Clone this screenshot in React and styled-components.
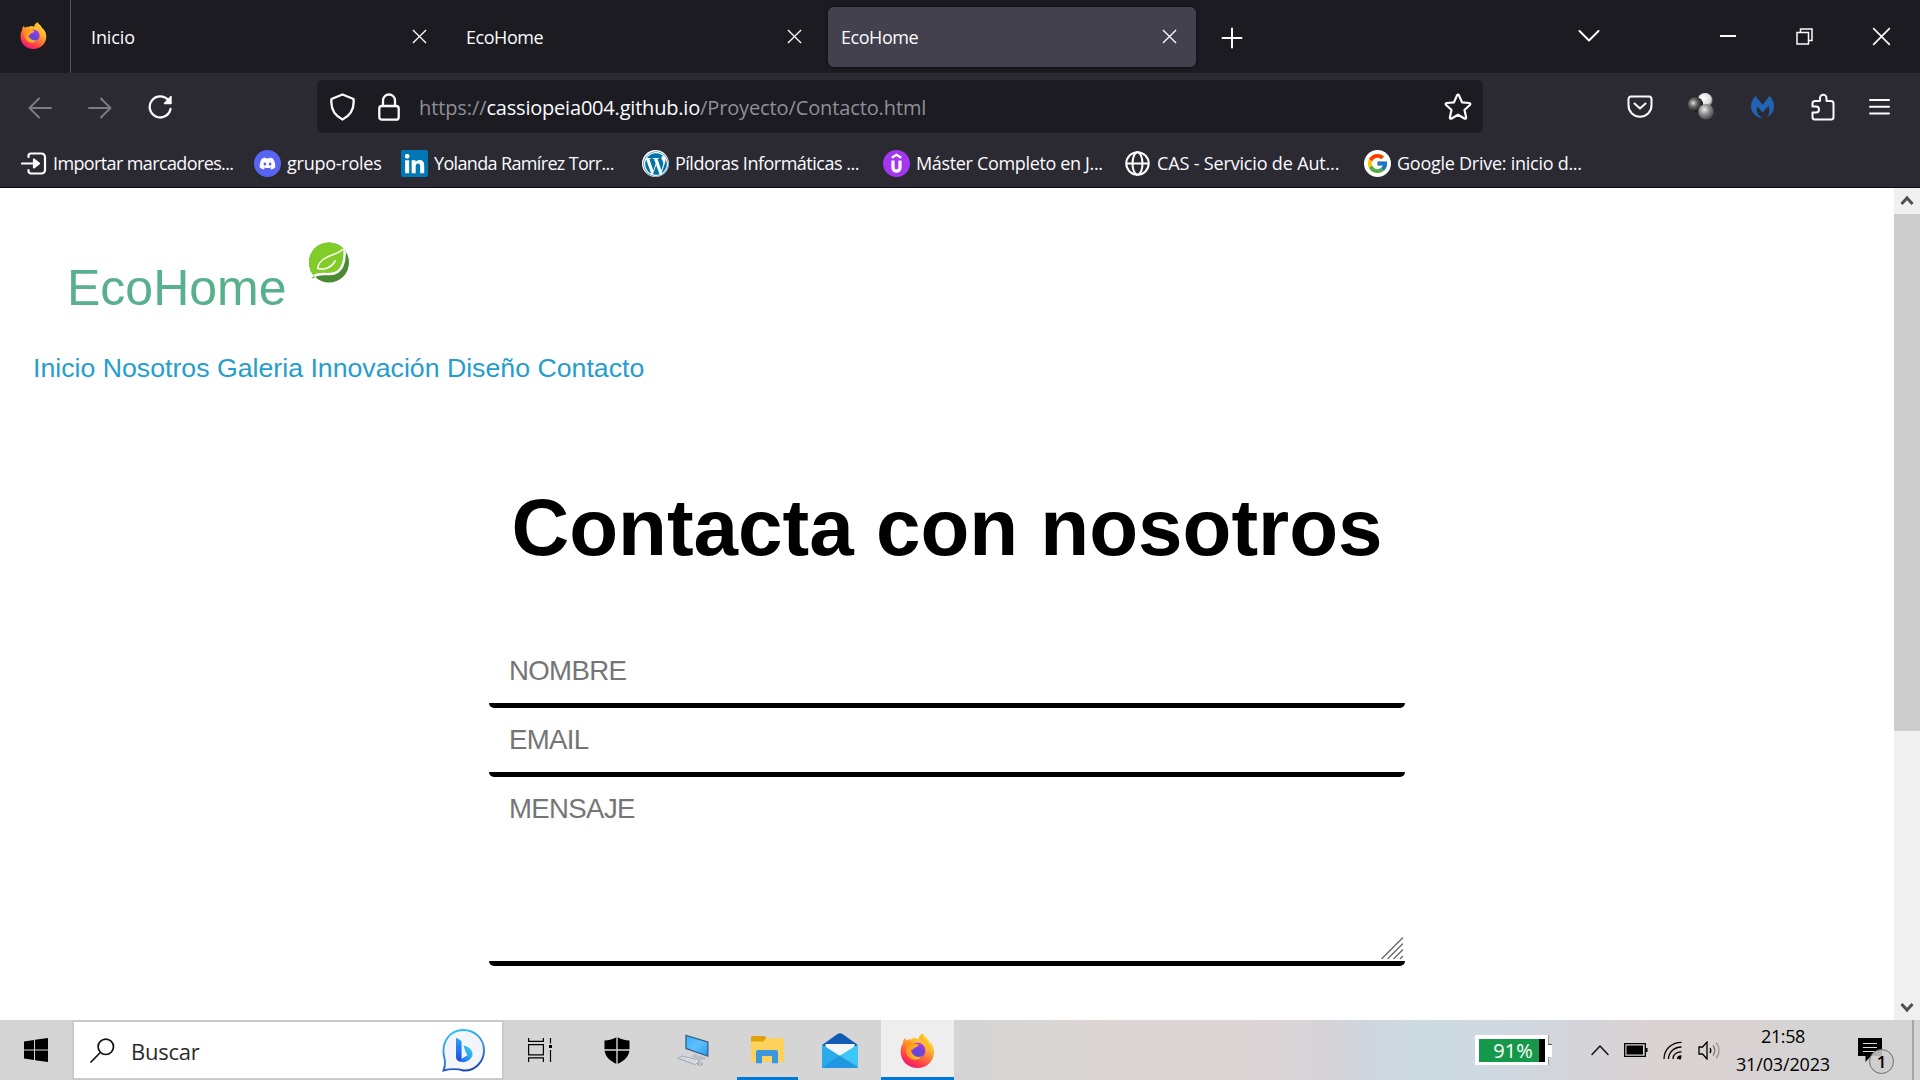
import React from "react";
import styled, { createGlobalStyle } from "styled-components";
import { FaDiscord, FaLinkedin, FaWordpress } from "react-icons/fa";
import { FcGoogle } from "react-icons/fc";

const GlobalStyle = createGlobalStyle`
  * { box-sizing: border-box; }
  body { margin: 0; background: #fff; overflow: hidden; }
`;

const uiFont = `"Open Sans", "Noto Sans", sans-serif`;
const pageFont = `"Liberation Sans", Arial, sans-serif`;

const Screen = styled.div`
  width: 1920px;
  height: 1080px;
  display: flex;
  flex-direction: column;
  overflow: hidden;
`;

const Label = styled.span`
  white-space: pre;
  letter-spacing: ${(p) => p.$track || 0}px;
`;

/* ---------- Tab strip ---------- */
const TabStrip = styled.header`
  height: 73px;
  flex: none;
  display: flex;
  align-items: center;
  background: #1c1b22;
  color: #fbfbfe;
  font: 18px ${uiFont};
`;

const FirefoxView = styled.div`
  width: 71px;
  height: 73px;
  padding: 22px 0 0 20px;
  border-right: 1px solid #55545c;
  margin-right: 7px;
`;

const Tab = styled.div`
  width: ${(p) => (p.$active ? 368 : 375)}px;
  height: 60px;
  padding: 0 ${(p) => (p.$active ? 19 : 26)}px 0 13px;
  display: flex;
  align-items: center;
  justify-content: space-between;
  border-radius: 6px;
  background: ${(p) => (p.$active ? "#42414d" : "transparent")};
  box-shadow: ${(p) => (p.$active ? "0 0 4px rgba(0,0,0,.5)" : "none")};
`;

const NewTab = styled.div`
  display: flex;
  margin-left: 25px;
  padding-top: 2px;
`;

const WindowControls = styled.div`
  margin-left: auto;
  padding-right: 29px;
  display: flex;
  align-items: center;
  gap: 59px;
`;

const ListTabs = styled.div`
  display: flex;
  margin-right: 61px;
`;

/* ---------- Navigation bar ---------- */
const NavBar = styled.div`
  height: 67px;
  flex: none;
  display: flex;
  align-items: center;
  background: #2b2a33;
  color: #fbfbfe;
`;

const NavButtons = styled.div`
  width: 317px;
  padding: 2px 0 0 28px;
  display: flex;
  align-items: center;
  gap: 36px;
`;

const UrlBar = styled.div`
  width: 1166px;
  height: 53px;
  padding: 0 11px 0 12px;
  display: flex;
  align-items: center;
  border-radius: 6px;
  background: #1c1b22;
  font: 20px ${uiFont};
`;

const UrlIcons = styled.div`
  width: 90px;
  display: flex;
  align-items: center;
  gap: 22px;
`;

const UrlText = styled.div`
  flex: 1;
  display: flex;
  color: #8f8f98;
  padding-top: 2px;
`;

const Host = styled(Label)`
  color: #fbfbfe;
`;

const ToolbarIcons = styled.div`
  flex: 1;
  display: flex;
  align-items: center;
  justify-content: space-between;
  padding: 0 29px 0 144px;
`;

/* ---------- Bookmarks ---------- */
const BookmarksBar = styled.nav`
  height: 48px;
  flex: none;
  display: flex;
  align-items: center;
  padding-left: 21px;
  background: #2b2a33;
  border-bottom: 1px solid #0c0c0d;
  color: #fbfbfe;
  font: 18px ${uiFont};
`;

const Bookmark = styled.div`
  width: ${(p) => p.$width}px;
  display: flex;
  align-items: center;
  gap: 6px;
`;

const BookmarkLabel = styled(Label)`
  padding-bottom: 1px;
`;

const Favicon = styled.span`
  width: 27px;
  height: 27px;
  margin-right: ${(p) => p.$pull || 0}px;
  flex: none;
  display: flex;
  align-items: center;
  justify-content: center;
  border-radius: ${(p) => p.$radius || "50%"};
  background: ${(p) => p.$bg || "transparent"};
  color: ${(p) => p.$fg || "#fff"};
  svg { flex: none; }
`;

/* ---------- Page ---------- */
const Viewport = styled.div`
  height: 832px;
  flex: none;
  display: flex;
  background: #fff;
`;

const Page = styled.main`
  width: 1894px;
  display: flex;
  flex-direction: column;
  padding-top: 48px;
  font-family: ${pageFont};
`;

const Brand = styled.div`
  height: 82px;
  display: flex;
  align-items: flex-start;
  gap: 14px;
  padding-left: 67px;
`;

const BrandName = styled.div`
  margin-top: 24px;
  width: 220px;
  font-size: 50px;
  line-height: 57px;
  color: #58b08c;
  white-space: nowrap;
`;

const SiteNav = styled.nav`
  margin: 35px 0 0 33px;
  font-size: 26.7px;
  line-height: 30px;
  color: #259dcd;
`;

const SiteLink = styled.a`
  color: inherit;
  text-decoration: none;
`;

const Title = styled.h1`
  margin: 99px 0 0;
  text-align: center;
  font-size: 80px;
  line-height: 92px;
  font-weight: 700;
  color: #000;
`;

const Form = styled.form`
  width: 916px;
  margin: 65px auto 0;
  display: flex;
  flex-direction: column;
`;

const Field = styled.input`
  display: block;
  width: 100%;
  height: ${(p) => p.$height || 69}px;
  padding: 17px 20px;
  margin: 0;
  border: 0;
  border-bottom: 5px solid #000;
  border-radius: 5px;
  outline: 0;
  resize: none;
  background: #fff;
  font: 27.6px/30px ${pageFont};
  letter-spacing: -0.65px;
  &::placeholder {
    color: #757575;
    opacity: 1;
  }
`;

const MessageBox = styled.div`
  position: relative;
`;

const Grip = styled.svg`
  position: absolute;
  right: 1px;
  bottom: 6px;
`;

const Scrollbar = styled.div`
  width: 26px;
  display: flex;
  flex-direction: column;
  align-items: center;
  background: #f0f0f0;
`;

const ScrollArrow = styled.div`
  height: 26px;
  display: flex;
  align-items: center;
  padding-bottom: ${(p) => p.$lift || 0}px;
`;

const Thumb = styled.div`
  width: 26px;
  height: 517px;
  margin-bottom: auto;
  background: #cdcdcd;
`;

/* ---------- Taskbar ---------- */
const Taskbar = styled.footer`
  height: 60px;
  flex: none;
  display: flex;
  align-items: stretch;
  color: #000;
  font-family: ${uiFont};
  background: linear-gradient(90deg, #d4d4d4 0, #d5d5d5 960px, #d9d6d4 1060px, #ddd5d5 1130px, #ddd4d5 1240px, #d6d4d8 1330px, #cfd6df 1370px, #cddae2 1420px, #cfd9e1 1500px, #d5d4d8 1590px, #dcd2d3 1660px, #dad2d2 1730px, #d5d4d4 1810px, #d4d4d4 1920px);
`;

const TaskItem = styled.div`
  width: ${(p) => p.$width}px;
  padding-right: ${(p) => p.$shift || 0}px;
  display: flex;
  align-items: center;
  justify-content: center;
  background: ${(p) => (p.$active ? "#eeeeee" : "transparent")};
  box-shadow: ${(p) => (p.$open ? "inset 0 -3px #0078d7" : "none")};
`;

const SearchBox = styled.div`
  width: 432px;
  border: 2px solid #cacaca;
  background: #fff;
  display: flex;
  align-items: center;
  padding: 0 17px 0 16px;
  color: #2b2b2b;
  font-size: 22px;
`;

const SearchText = styled(Label)`
  margin: 1px auto 0 16px;
`;

const Tray = styled.div`
  margin-left: auto;
  display: flex;
  align-items: center;
`;

const BatteryMeter = styled.div`
  display: flex;
  align-items: center;
  margin-right: 39px;
`;

const BatteryBody = styled.div`
  width: 73px;
  height: 30px;
  border: 4px solid #fff;
  border-bottom-width: 3px;
  border-right-width: 3px;
  box-shadow: 1px 0 #999;
  display: flex;
  align-items: center;
  justify-content: center;
  padding-left: 2px;
  background: linear-gradient(90deg, #16984a 60px, #000 60px);
  color: #fff;
  font-size: 20px;
  line-height: 23px;
`;

const BatteryTip = styled.div`
  width: 4px;
  height: 13px;
  background: #fff;
  border-top: 1px solid #555;
`;

const TrayIcons = styled.div`
  display: flex;
  align-items: center;
  gap: 15px;
`;

const Clock = styled.div`
  width: 126px;
  padding-right: 2px;
  display: flex;
  flex-direction: column;
  align-items: center;
  font-size: 18px;
  line-height: 28px;
`;

const Notifications = styled.div`
  position: relative;
  width: 65px;
  height: 60px;
  padding: 18px 0 0 11px;
`;

const Badge = styled.span`
  position: absolute;
  left: 22px;
  top: 29px;
  width: 25px;
  height: 25px;
  border: 1px solid #6d6d6d;
  border-radius: 50%;
  background: rgba(205, 205, 205, 0.88);
  text-align: center;
  font-size: 17px;
  font-weight: 600;
  line-height: 23px;
`;

const ShowDesktop = styled.div`
  width: 8px;
  align-self: stretch;
  border-left: 2px solid #a5a5a5;
`;

/* ---------- Drawings ---------- */
const Cross = ({ size, w = 1.4 }) => (
  <svg width={size} height={size} viewBox="0 0 16 16" fill="none" stroke="#fbfbfe" strokeWidth={w}>
    <path d="M1 1l14 14M15 1L1 15" />
  </svg>
);

const Line = ({ w, h, box, sw = 2, stroke = "currentColor", children }) => (
  <svg width={w} height={h} viewBox={box || `0 0 ${w} ${h}`} fill="none" stroke={stroke} strokeWidth={sw} strokeLinecap="round" strokeLinejoin="round">
    {children}
  </svg>
);

const Firefox = ({ size, id }) => (
  <svg width={size} height={size} viewBox="0 0 34 35">
    <defs>
      <linearGradient id={id + "body"} x1="0.8" y1="0" x2="0.25" y2="1">
        <stop offset="0" stopColor="#fff44f" />
        <stop offset="0.3" stopColor="#ffbd2e" />
        <stop offset="0.58" stopColor="#ff7139" />
        <stop offset="0.82" stopColor="#ff3250" />
        <stop offset="1" stopColor="#e31587" />
      </linearGradient>
      <radialGradient id={id + "globe"} cx="0.5" cy="0.75" r="0.75">
        <stop offset="0" stopColor="#5a4ad0" />
        <stop offset="0.55" stopColor="#7b3fe0" />
        <stop offset="1" stopColor="#b833e1" />
      </radialGradient>
      <linearGradient id={id + "fox"} x1="0" y1="0" x2="1" y2="0.4">
        <stop offset="0" stopColor="#ff8a16" />
        <stop offset="1" stopColor="#ffc02f" />
      </linearGradient>
    </defs>
    <path fill={`url(#${id}body)`} d="M22 0.3C24 3 27.500 5 28.500 8.500C30 9 31 10.500 31.300 11.500C33 14 33.900 17.500 33.500 20.500C32.800 29 25.500 35 17 35C7.500 35 0.300 28 0.200 19C0.100 15 1.100 12.500 2.300 10.500C2.300 8.500 3 6.300 4.600 4.800C4.800 6 5.300 7 6 7.600C7.500 6.300 9 6.100 11 6.500C13 4.500 15.500 4.800 18 6.500C18 4 19.800 1.600 22 0.300Z" />
    <circle cx="17.200" cy="17.500" r="7.700" fill={`url(#${id}globe)`} />
    <path fill={`url(#${id}fox)`} d="M5.500 11C8 8.500 11 8.500 13 10.200C14.500 11 16.500 10.800 18.200 11.400C17.800 13.600 15.500 14 14 14.700C12.700 15.500 12.500 17 10.500 17.500C11.500 22.500 17 25.500 21.500 23C17.500 29 7.500 27.500 5.500 19Z" />
    <path fill="#ffb52e" opacity=".85" d="M18 6.500C23.500 8 27.500 13 26 19C29.500 16 28.800 10.500 26 7.500C24.500 5.800 22.500 4 22.200 0.800C19.800 2 18.200 4.200 18 6.500Z" />
  </svg>
);

const Leaf = () => (
  <svg width="60" height="55" viewBox="0 0 60 55">
    <defs>
      <clipPath id="leafDisc"><circle cx="28" cy="26.500" r="20" /></clipPath>
    </defs>
    <g clipPath="url(#leafDisc)">
      <rect width="60" height="55" fill="#4a8a35" />
      <path fill="#80cc28" d="M42.500 8C46 25 41 38 29 38C22 38.500 17 36 10 41L0 40V0H42Z" />
      <path fill="none" stroke="#fff" strokeWidth="2.400" d="M42.800 8C46 27 40 38 29 38C22 38.500 17 36.500 10 42" />
    </g>
    <path fill="none" stroke="#fff" strokeWidth="1.500" strokeLinecap="round" d="M41.500 13.500C37 18.500 30 17.500 22 23.500C18.500 26 17 29.500 16.600 32.500C24 34.500 31 31 34.200 24.800" />
    <path fill="#4a8a35" d="M10.500 42.500L13.500 39.500L13 42Z" />
  </svg>
);

const Balls = () => (
  <svg width="29" height="27" viewBox="0 0 29 27">
    <defs>
      <radialGradient id="bw" cx=".4" cy=".35" r=".65"><stop offset="0" stopColor="#fff" /><stop offset=".7" stopColor="#ddd" /><stop offset="1" stopColor="#777" /></radialGradient>
      <radialGradient id="bk" cx=".35" cy=".4" r=".65"><stop offset="0" stopColor="#ddd" /><stop offset=".4" stopColor="#666" /><stop offset="1" stopColor="#0c0c0c" /></radialGradient>
      <radialGradient id="bg" cx=".4" cy=".35" r=".65"><stop offset="0" stopColor="#eee" /><stop offset=".5" stopColor="#8f8f8f" /><stop offset="1" stopColor="#4a4a4a" /></radialGradient>
    </defs>
    <circle cx="17" cy="7.500" r="7.500" fill="url(#bw)" />
    <circle cx="7.500" cy="11.500" r="7.600" fill="url(#bk)" />
    <circle cx="18" cy="18.800" r="7.800" fill="url(#bg)" />
  </svg>
);

const Malware = () => (
  <svg width="25" height="22" viewBox="0 0 25 22">
    <path fill="#2263b3" d="M4.500 0L11.500 8.700L18.500 0C21.500 3 23 6.500 23 10.500C23 15 20.500 19 16 21C18.500 18 19 14.500 17.500 10L11.500 16.500L6.500 10.500C4.500 15 7 19.500 11.500 22C5 21.500 0 17 0 10.500C0 6.500 1.500 3 4.500 0Z" />
  </svg>
);

const Udemy = () => (
  <svg width="27" height="27" viewBox="0 0 27 27" fill="none" stroke="#fff">
    <path strokeWidth="2.400" d="M8.800 7.800L13.500 4.800L18.200 7.800" />
    <path strokeWidth="3.200" d="M10 10.500V17.500C10 22.300 17 22.300 17 17.500V10.500" />
  </svg>
);

const Bing = () => (
  <svg width="43" height="43" viewBox="0 0 43 43">
    <defs>
      <linearGradient id="bingRing" x1="0.3" y1="0" x2="0.6" y2="1"><stop offset="0" stopColor="#28c4ee" /><stop offset=".55" stopColor="#3b87e6" /><stop offset="1" stopColor="#1748b5" /></linearGradient>
      <linearGradient id="bingStem" x1="0" y1="0" x2="0" y2="1"><stop offset="0" stopColor="#2aa5f5" /><stop offset="1" stopColor="#1b49e8" /></linearGradient>
      <linearGradient id="bingBowl" x1="0" y1="1" x2="1" y2="0"><stop offset="0" stopColor="#1b58ee" /><stop offset="1" stopColor="#35dcf0" /></linearGradient>
    </defs>
    <path fill="#f3f5fb" stroke="url(#bingRing)" strokeWidth="1.900" d="M1.500 41.500C3 37.500 3.300 33 2.500 29.500C-1.500 14 7 1 21.500 1C33 1 42 10 42 21.200C42 33 33 42 21.500 41.500C14.500 39.500 8 39.800 1.500 41.500Z" />
    <path fill="url(#bingBowl)" d="M21.500 16.500C26 17.500 30.500 20 30.500 25C30.500 30 24 34 20 33C16.500 32.500 14.500 31 14.300 28L20 29.500L25.500 26.200L23.500 22.500Z" />
    <path fill="url(#bingStem)" d="M14 9C16 9.500 19 11 19.600 13V28C19.600 31 18.500 32.600 17.500 32.400C15 31.800 14 30 14 27.500Z" />
  </svg>
);

const Computer = () => (
  <svg width="32" height="32" viewBox="0 0 32 32">
    <defs><linearGradient id="pc" x1="0" y1="0" x2="1" y2="1"><stop offset="0" stopColor="#35b0f8" /><stop offset=".5" stopColor="#5fc1fb" /><stop offset="1" stopColor="#279ff0" /></linearGradient></defs>
    <path fill="#b5c0c8" d="M17 20L27 23L30 25L24 26L15 23Z" />
    <path fill="#38618a" d="M8.300 0.500L31.500 7.500V23L8.300 15Z" />
    <path fill="url(#pc)" d="M9.700 2.300L30.200 8.500V21.200L9.700 14.100Z" />
    <path fill="#eef1f3" stroke="#8d979e" strokeWidth=".8" d="M0.800 24.500L5 22L23 26.500L18 30.500Z" />
    <path stroke="#9aa4ab" strokeWidth=".7" strokeDasharray="2 .7" d="M3 24.600L18.500 29M4.500 23.500L20.500 27.800" />
    <path fill="#dce1e5" stroke="#7c868d" strokeWidth=".7" d="M20.500 30L24 28.500L26 30L22.500 31.500Z" />
  </svg>
);

const Folder = () => (
  <svg width="33" height="28" viewBox="0 0 33 28">
    <path fill="#e0a10e" d="M0 1.500C0 .7.600 0 1.500 0H13.500L15.500 2L14 6H0Z" />
    <path fill="#fcd25c" d="M0 5.500H12.500L15.500 2H31C32 2 33 3 33 4V24C33 25 32 26 31 26H1.500C.7 26 0 25.300 0 24.500Z" />
    <path fill="#3b97dd" d="M5 16C5 14.800 6 14 7 14H25C26.200 14 27 14.800 27 16V27.300H21V20H11V27.300H5Z" />
  </svg>
);

const Mail = () => (
  <svg width="36" height="35" viewBox="0 0 36 35">
    <path fill="#0f5cb5" d="M0 12L15.500 1C17 0 19 0 20.500 1L36 12L30 18H6Z" />
    <path fill="#f3f4f7" d="M3.500 11H32.500V22H3.500Z" />
    <path fill="#2cabeb" d="M0 11.500L18 23L36 35H1C.4 35 0 34.600 0 34Z" />
    <path fill="#3dc7f5" d="M36 11.500V34L18 22.500Z" />
    <path fill="#1c90df" d="M18 22.500L36 33.500C36 34.500 35.500 35 35 35H1.500C1 35 .5 34.800.3 34.500Z" opacity=".75" />
  </svg>
);

const tabs = [
  { title: "Inicio", track: -0.1 },
  { title: "EcoHome", track: -0.45 },
  { title: "EcoHome", track: -0.45, active: true },
];

const bookmarks = [
  {
    text: "Importar marcadores...", width: 233, track: -0.62,
    icon: (
      <Favicon $pull={-1}>
        <Line w={27} h={27} sw={2.2}>
          <path d="M7.500 7V6a2.500 2.500 0 0 1 2.500-2.500H20.500A3.500 3.500 0 0 1 24 7V20A3.500 3.500 0 0 1 20.500 23.500H10A2.500 2.500 0 0 1 7.500 21V20M1 13.500H13" />
          <path d="M13 9.500V17.500L18 13.500Z" fill="currentColor" />
        </Line>
      </Favicon>
    ),
  },
  { text: "grupo-roles", width: 147, track: -0.25, icon: <Favicon $bg="#5865f2"><FaDiscord size={17} /></Favicon> },
  { text: "Yolanda Ramírez Torr...", width: 241, track: -0.65, icon: <Favicon $bg="linear-gradient(#fff,#fff) center/20px 20px no-repeat" $fg="#0077b5" $radius="3px"><FaLinkedin size={31} /></Favicon> },
  { text: "Píldoras Informáticas ...", width: 241, track: -0.5, icon: <Favicon $bg="#fff" $fg="#0073aa"><FaWordpress size={26} /></Favicon> },
  { text: "Máster Completo en J...", width: 242, track: -0.34, icon: <Favicon $bg="#a435f0"><Udemy /></Favicon> },
  {
    text: "CAS - Servicio de Aut...", width: 239, track: -0.16, 
    icon: (
      <Favicon $pull={-1}>
        <Line w={27} h={27}><circle cx="12.500" cy="13.500" r="11.200" /><ellipse cx="12.500" cy="13.500" rx="5" ry="11.200" /><path d="M1.500 13.500H23.500" /></Line>
      </Favicon>
    ),
  },
  { text: "Google Drive: inicio d...", width: 240, track: -0.26, icon: <Favicon $bg="#fff"><FcGoogle size={23} /></Favicon> },
];

const links = ["Inicio", "Nosotros", "Galeria", "Innovación", "Diseño", "Contacto"];

export default function App() {
  return (
    <Screen>
      <GlobalStyle />
      <TabStrip>
        <FirefoxView><Firefox size={27} id="view" /></FirefoxView>
        {tabs.map((t, i) => (
          <Tab key={i} $active={t.active}>
            <Label $track={t.track}>{t.title}</Label>
            <Cross size={15} />
          </Tab>
        ))}
        <NewTab><Line w={22} h={22}><path d="M11 1.500V20.500M1.500 11H20.500" /></Line></NewTab>
        <WindowControls>
          <ListTabs><Line w={22} h={13}><path d="M1.500 1L11 10.500L20.500 1" /></Line></ListTabs>
          <Line w={17} h={20}><path d="M0 9H16" strokeLinecap="butt" /></Line>
          <Line w={17} h={17} sw={1.5}><path strokeLinejoin="miter" d="M1 4.500H12.500V16H1ZM4.500 4V1H16V12.500H13" /></Line>
          <Cross size={19} w={1.4} />
        </WindowControls>
      </TabStrip>

      <NavBar>
        <NavButtons>
          <Line w={24} h={22} stroke="#7d7c84"><path d="M23 11H2M11 1.500L1.500 11L11 20.500" /></Line>
          <Line w={24} h={22} stroke="#7d7c84"><path d="M1 11H22M13 1.500L22.500 11L13 20.500" /></Line>
          <Line w={25} h={25} sw={2.3}>
            <path d="M20.500 5.500A10.500 10.500 0 1 0 22.500 14" />
            <path d="M23 1.500V8.500H16.500Z" fill="currentColor" strokeWidth="1.500" />
          </Line>
        </NavButtons>
        <UrlBar>
          <UrlIcons>
            <Line w={27} h={28} sw={2.3}><path d="M13.500 1.500L24.500 6C25.500 15 21.500 22.500 13.500 26.500C5.500 22.500 1.500 15 2.500 6Z" /></Line>
            <Line w={22} h={28} sw={2.3}><rect x="1.300" y="13" width="19.400" height="13.700" rx="2.500" /><path d="M5 13V7.500a6 6 0 0 1 12 0V13" /></Line>
          </UrlIcons>
          <UrlText>
            <Label $track={-0.1}>https://</Label>
            <Host $track={-0.2}>cassiopeia004.github.io</Host>
            <Label $track={-0.12}>/Proyecto/Contacto.html</Label>
          </UrlText>
          <Line w={28} h={28} sw={2.2}><path d="M12.900 2.600Q14 .8 15.100 2.600L18 9.300L25.200 10Q27.200 10.400 25.800 12L20.500 17L22.100 24.200Q22.300 26.300 20.400 25.500L14 21.700L7.600 25.500Q5.700 26.300 5.900 24.200L7.500 17L2.200 12Q.8 10.400 2.800 10L10 9.300Z" /></Line>
        </UrlBar>
        <ToolbarIcons>
          <Line w={26} h={23}><path d="M4 1.500H22A2.500 2.500 0 0 1 24.500 4V10.500A11.500 11.200 0 0 1 1.500 10.500V4A2.500 2.500 0 0 1 4 1.500Z" /><path d="M7.500 8.500L13 13.500L18.500 8.500" /></Line>
          <Balls />
          <Malware />
          <Line w={24} h={28}><path d="M9 8V5a3 3 0 0 1 6.500 0V8H20A2.500 2.500 0 0 1 22.500 10.500V24A2.500 2.500 0 0 1 20 26.500H4A2.500 2.500 0 0 1 1.500 24V19.500H5A3 3 0 0 0 5 13.500H1.500V10.500A2.500 2.500 0 0 1 4 8Z" /></Line>
          <Line w={22} h={18}><path d="M1 2H20M1 8.700H20M1 15.500H20" /></Line>
        </ToolbarIcons>
      </NavBar>

      <BookmarksBar>
        {bookmarks.map((b) => (
          <Bookmark key={b.text} $width={b.width}>
            {b.icon}
            <BookmarkLabel $track={b.track}>{b.text}</BookmarkLabel>
          </Bookmark>
        ))}
      </BookmarksBar>

      <Viewport>
        <Page>
          <Brand>
            <BrandName>EcoHome</BrandName>
            <Leaf />
          </Brand>
          <SiteNav>
            {links.map((l, i) => (
              <React.Fragment key={l}>{i > 0 && " "}<SiteLink>{l}</SiteLink></React.Fragment>
            ))}
          </SiteNav>
          <Title>Contacta con nosotros</Title>
          <Form>
            <Field placeholder="NOMBRE" />
            <Field placeholder="EMAIL" />
            <MessageBox>
              <Field as="textarea" $height={189} placeholder="MENSAJE" />
              <Grip width="23" height="23" viewBox="0 0 23 23" stroke="#6e6e6e" strokeWidth="1.500" strokeLinecap="round">
                <path d="M1 21.500L21.500 1M7 21.500L21.500 7M13 21.500L21.500 13M19.500 21.500L21.500 19.500" />
              </Grip>
            </MessageBox>
          </Form>
        </Page>
        <Scrollbar>
          <ScrollArrow $lift={2}><svg width="14" height="11" viewBox="0 0 14 11"><path d="M1.500 9L7 3L12.500 9" fill="none" stroke="#505050" strokeWidth="3" /></svg></ScrollArrow>
          <Thumb />
          <ScrollArrow><svg width="14" height="11" viewBox="0 0 14 11"><path d="M1.500 2L7 8L12.500 2" fill="none" stroke="#505050" strokeWidth="3" /></svg></ScrollArrow>
        </Scrollbar>
      </Viewport>

      <Taskbar>
        <TaskItem $width={72}>
          <svg width="24" height="24" viewBox="0 0 24 24"><path d="M0 3.400L10 2V11.400H0ZM11 1.800L24 0V11.400H11ZM0 12.500H10V22L0 20.600ZM11 12.500H24V24L11 22.200Z" /></svg>
        </TaskItem>
        <SearchBox>
          <Line w={25} h={25} sw={1.7} stroke="#111"><circle cx="15.800" cy="8.800" r="7.700" /><path d="M10.300 14.500L1 24" /></Line>
          <SearchText $track={-0.25}>Buscar</SearchText>
          <Bing />
        </SearchBox>
        <TaskItem $width={72}>
          <svg width="25" height="24" viewBox="0 0 25 24" fill="none" stroke="#000" strokeWidth="1.200"><path d="M.6 0V3.400H15.400V0M.6 6.600H15.400V16.800H.6ZM.6 24V19.800H15.400V24M22.500 0V5.500M22.500 12V24" /><path d="M21 7H24V10H21Z" fill="#000" stroke="none" /></svg>
        </TaskItem>
        <TaskItem $width={81}>
          <svg width="26" height="27" viewBox="0 0 26 27"><path d="M13 0C17 2.500 21 3.300 25.500 3.500V12C25.500 19 20 24.500 13 27C6 24.500.5 19 .5 12V3.500C5 3.300 9 2.500 13 0Z" /><path d="M13 0V27M0 13H26" stroke="#d5d5d5" strokeWidth="1.400" /></svg>
        </TaskItem>
        <TaskItem $width={80} $shift={8}><Computer /></TaskItem>
        <TaskItem $width={61} $open><Folder /></TaskItem>
        <TaskItem $width={83} $shift={-1}><Mail /></TaskItem>
        <TaskItem $width={73} $active $open $shift={1}><Firefox size={35} id="task" /></TaskItem>
        <Tray>
          <BatteryMeter>
            <BatteryBody>91%</BatteryBody>
            <BatteryTip />
          </BatteryMeter>
          <TrayIcons>
            <Line w={18} h={12} sw={1.5} stroke="#111"><path d="M1 10.500L9 2L17 10.500" /></Line>
            <svg width="24" height="14" viewBox="0 0 24 14"><path d="M.7.700H21.300V13.300H.7Z" fill="none" stroke="#000" strokeWidth="1.300" /><path d="M2.500 2.500H19V11.500H2.500ZM22 5H23.500V9H22Z" /></svg>
            <svg width="20" height="19" viewBox="0 0 20 19" fill="none" stroke="#000" strokeWidth="1.300"><path d="M1 18C1 8.500 8 1.500 18.500 1.300M5.500 18C5.500 11.500 10.500 6.300 18.500 6M10 18C10 14 13 11 18.500 10.800" /><path d="M14.500 18C14.500 16 16 15.200 18.500 15" /><circle cx="16.800" cy="17" r="1.500" fill="#000" stroke="none" /></svg>
            <svg width="23" height="19" viewBox="0 0 23 19" fill="none" stroke="#000" strokeWidth="1.300"><path d="M1 6H4.500L9 1V18L4.500 13H1Z" /><path d="M12 7C13 8.500 13 10.500 12 12" /><path stroke="#777" d="M15 4.500C17.200 7.500 17.200 11.500 15 14.500" /><path stroke="#999" d="M18 1.800C22 6 22 13 18 17.200" /></svg>
          </TrayIcons>
          <Clock>
            <Label $track={-0.4}>21:58</Label>
            <Label $track={-0.15}>31/03/2023</Label>
          </Clock>
          <Notifications>
            <svg width="24" height="24" viewBox="0 0 24 24"><path d="M0 0H24V18H13L7.500 24V18H0Z" /><path d="M5 5.500H19M5 9.500H19M5 13.500H19" stroke="#ddd" strokeWidth="1.200" /></svg>
            <Badge>1</Badge>
          </Notifications>
          <ShowDesktop />
        </Tray>
      </Taskbar>
    </Screen>
  );
}
